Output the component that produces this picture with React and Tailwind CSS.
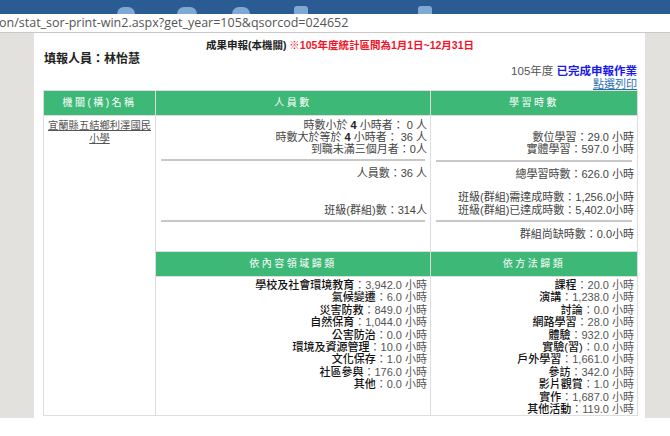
const FONT = "font-['Liberation_Sans','Noto_Sans_CJK_TC',sans-serif]"

const TOPIC = [
  ['學校及社會環境教育', '3,942.0 小時'],
  ['氣候變遷', '6.0 小時'],
  ['災害防救', '849.0 小時'],
  ['自然保育', '1,044.0 小時'],
  ['公害防治', '0.0 小時'],
  ['環境及資源管理', '10.0 小時'],
  ['文化保存', '1.0 小時'],
  ['社區參與', '176.0 小時'],
  ['其他', '0.0 小時'],
]

const METHOD = [
  ['課程', '20.0 小時'],
  ['演講', '1,238.0 小時'],
  ['討論', '0.0 小時'],
  ['網路學習', '28.0 小時'],
  ['體驗', '932.0 小時'],
  ['實驗(習)', '0.0 小時'],
  ['戶外學習', '1,661.0 小時'],
  ['參訪', '342.0 小時'],
  ['影片觀賞', '1.0 小時'],
  ['實作', '1,687.0 小時'],
  ['其他活動', '119.0 小時'],
]

function Rule() {
  return <div className="h-[2px] bg-[#c8c8c8] mx-[2px]" />
}

function Green({ children }) {
  return (
    <th className="font-normal border border-[#ddd] bg-[#3eb877] text-white text-[10px] tracking-[2.5px]">
      {children}
    </th>
  )
}

export default function App() {
  return (
    <div className={`w-[670px] h-[436px] overflow-hidden bg-white ${FONT}`}>
      {/* window title strip with faded taskbar icons */}
      <div className="h-[14px] bg-[#2a5b93] flex items-end">
        <div className="w-[117px] shrink-0" />
        <div className="w-[18px] h-[7px] shrink-0 rounded-t-full bg-[#7fa9d3]" />
        <div className="w-[42px] shrink-0" />
        <div className="w-[20px] h-[7px] shrink-0 rounded-t-full bg-[#7fa9d3]" />
        <div className="w-[35px] shrink-0" />
        <div className="w-[18px] h-[7px] shrink-0 rounded-t-full bg-[#7fa9d3]" />
        <div className="w-[44px] shrink-0" />
        <div className="w-[14px] h-[8px] shrink-0 rounded-t-[3px] bg-[#7fa9d3]" />
        <div className="w-[110px] shrink-0" />
        <div className="w-[14px] h-[8px] shrink-0 rounded-t-[3px] bg-[#7fa9d3]" />
      </div>
      <div className="h-[19px] bg-white border-b border-[#c9c9c9] flex items-center font-['Open_Sans',sans-serif] text-[12.5px] text-[#555] whitespace-nowrap -ml-[1px]">
        on/stat_sor-print-win2.aspx?get_year=105&amp;qsorcod=024652
      </div>

      <div className="flex h-[385px]">
        <div className="w-[34px] shrink-0 bg-[#e2e1dd]" />

        <div className="w-[611px] shrink-0 bg-white pl-[9px] pt-[6px]">
          <div className="text-center text-[10.5px] leading-[13px] font-bold pr-[8px]">
            <span className="text-[#222]">成果申報(本機關) </span>
            <span className="text-[#f0142a]">※105年度統計區間為1月1日~12月31日</span>
          </div>
          <div className="text-[12px] leading-[14px] font-bold text-[#222] pl-[1px]">填報人員：林怡慧</div>
          <div className="w-[594px] text-right text-[11.5px] leading-[13px] mt-[-1px]">
            <span className="text-[#555]">105年度 </span>
            <span className="text-[#1a1ae6] font-bold">已完成申報作業</span>
          </div>
          <div className="w-[594px] text-right text-[11px] leading-[12px]">
            <span className="text-[#2a6fb6] underline">點選列印</span>
          </div>

          <table className="w-[594px] table-fixed border-collapse text-[11px] leading-[12px]">
            <colgroup>
              <col className="w-[112px]" />
              <col className="w-[275px]" />
              <col className="w-[207px]" />
            </colgroup>
            <thead>
              <tr className="h-[25px]">
                <Green>機關(構)名稱</Green>
                <Green>人員數</Green>
                <Green>學習時數</Green>
              </tr>
            </thead>
            <tbody>
              <tr className="h-[135px]">
                <td rowSpan={3} className="align-top text-center border border-[#ddd] pt-[3px] px-0">
                  <span className="text-[#555] underline text-[10.3px] leading-[13px] whitespace-nowrap">
                    宜蘭縣五結鄉利澤國民<br />小學
                  </span>
                </td>
                <td className="align-top border border-[#ddd] p-0">
                  <div className="flex flex-col h-[135px] pt-[3px] px-[3px] text-right text-[#444]">
                    <div>時數小於 <b className="text-[#222]">4</b> 小時者： 0 人</div>
                    <div>時數大於等於 <b className="text-[#222]">4</b> 小時者： 36 人</div>
                    <div>到職未滿三個月者：0人</div>
                    <div className="mt-[4px]"><Rule /></div>
                    <div className="mt-[6px]">人員數：36 人</div>
                    <div className="mt-[25px]">班級(群組)數：314人</div>
                    <div className="mt-[4px]"><Rule /></div>
                  </div>
                </td>
                <td className="align-top border border-[#ddd] p-0">
                  <div className="flex flex-col h-[135px] pt-[15px] px-[3px] text-right text-[#444]">
                    <div>數位學習：29.0 小時</div>
                    <div>實體學習：597.0 小時</div>
                    <div className="mt-[5px]"><Rule /></div>
                    <div className="mt-[6px]">總學習時數：626.0 小時</div>
                    <div className="mt-[11px]">班級(群組)需達成時數：1,256.0小時</div>
                    <div className="mt-[1px]">班級(群組)已達成時數：5,402.0小時</div>
                    <div className="mt-[4px]"><Rule /></div>
                    <div className="mt-[6px]">群組尚缺時數：0.0小時</div>
                  </div>
                </td>
              </tr>
              <tr className="h-[25px]">
                <Green>依內容領域歸類</Green>
                <Green>依方法歸類</Green>
              </tr>
              <tr className="h-[138px]">
                <td className="align-top border border-[#ddd] pt-[2px] px-[3px] text-right leading-[12.4px]">
                  {TOPIC.map(([k, v]) => (
                    <div key={k}>
                      <span className="text-[#111] font-medium">{k}</span>
                      <span className="text-[#555]">：{v}</span>
                    </div>
                  ))}
                </td>
                <td className="align-top border border-[#ddd] pt-[2px] px-[3px] text-right leading-[12.4px]">
                  {METHOD.map(([k, v]) => (
                    <div key={k}>
                      <span className="text-[#111] font-medium">{k}</span>
                      <span className="text-[#555]">：{v}</span>
                    </div>
                  ))}
                </td>
              </tr>
            </tbody>
          </table>
        </div>

        <div className="flex-1 bg-[#e2e1dd]" />
      </div>
    </div>
  )
}
